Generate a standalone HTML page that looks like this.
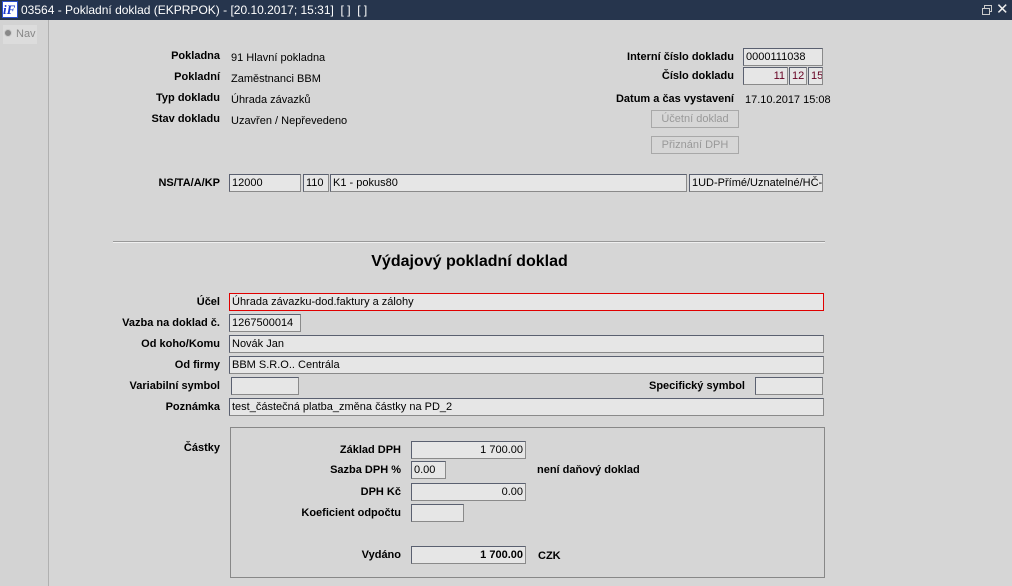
<!DOCTYPE html>
<html><head><meta charset="utf-8"><style>
*{margin:0;padding:0;box-sizing:border-box}
body{width:1012px;height:586px;background:#d6d6d6;font-family:"Liberation Sans",Arial,sans-serif;font-size:11px;color:#000;position:relative;overflow:hidden}
.a{position:absolute;white-space:nowrap}
.l{position:absolute;font-weight:bold;text-align:right;white-space:nowrap}
.f{position:absolute;height:18px;background:#e6e6e6;border:1px solid #8a8a8a;border-top-color:#5a6070;border-left-color:#5a6070;padding:2px 2px 0 2px;white-space:nowrap;overflow:hidden;line-height:13px}
.r{text-align:right}
.btn{position:absolute;height:18px;border:1px solid #a8a8a8;background:#d6d6d6;color:#999;text-align:center;line-height:16px}
</style></head><body>
<div class="a" style="left:0;top:0;width:1012px;height:20px;background:#26354d"></div>
<div class="a" style="left:2px;top:1px;width:16px;height:17px;background:#fff;border:1px solid #2a4fd0"></div>
<div class="a" style="left:3px;top:2px;font:italic bold 13px 'Liberation Serif',serif;color:#1a3ad0">iF</div>
<div class="a" style="left:21px;top:3px;color:#fff;font-size:12px">03564 - Pokladní doklad (EKPRPOK) - [20.10.2017; 15:31]&nbsp; [ ]&nbsp; [ ]</div>
<div class="a" style="left:984px;top:5px;width:8px;height:7px;border:1px solid #ccc"></div>
<div class="a" style="left:982px;top:8px;width:8px;height:7px;border:1px solid #ccc;background:#26354d"></div>
<div class="a" style="left:996px;top:0px;color:#eee;font-size:15px">✕</div>
<div class="a" style="left:0;top:20px;width:49px;height:566px;background:#d3d3d3;border-right:1px solid #b0b0b0"></div>
<div class="a" style="left:3px;top:25px;width:34px;height:19px;background:#dcdcdc"></div>
<div class="a" style="left:4px;top:29px;width:8px;height:8px;border-radius:50%;background:#888;border:1px solid #ccc"></div>
<div class="a" style="left:16px;top:28px;color:#888">Nav</div>

<div class="l" style="right:792px;top:50px">Pokladna</div><div class="a" style="left:231px;top:52px">91 Hlavní pokladna</div>
<div class="l" style="right:792px;top:71px">Pokladní</div><div class="a" style="left:231px;top:73px">Zaměstnanci BBM</div>
<div class="l" style="right:792px;top:92px">Typ dokladu</div><div class="a" style="left:231px;top:94px">Úhrada závazků</div>
<div class="l" style="right:792px;top:113px">Stav dokladu</div><div class="a" style="left:231px;top:115px">Uzavřen / Nepřevedeno</div>

<div class="l" style="right:278px;top:51px">Interní číslo dokladu</div>
<div class="f" style="left:743px;top:48px;width:80px">0000111038</div>
<div class="l" style="right:278px;top:70px">Číslo dokladu</div>
<div class="f r" style="left:743px;top:67px;width:45px;color:#602">11</div>
<div class="f r" style="left:789px;top:67px;width:18px;color:#602">12</div>
<div class="f r" style="left:808px;top:67px;width:15px;color:#602">15</div>
<div class="l" style="right:278px;top:93px">Datum a čas vystavení</div>
<div class="a" style="left:745px;top:94px">17.10.2017 15:08</div>
<div class="btn" style="left:651px;top:110px;width:88px">Účetní doklad</div>
<div class="btn" style="left:651px;top:136px;width:88px">Přiznání DPH</div>

<div class="l" style="right:792px;top:177px">NS/TA/A/KP</div>
<div class="f" style="left:229px;top:174px;width:72px">12000</div>
<div class="f" style="left:303px;top:174px;width:26px">110</div>
<div class="f" style="left:330px;top:174px;width:357px">K1 - pokus80</div>
<div class="f" style="left:689px;top:174px;width:134px">1UD-Přímé/Uznatelné/HČ-D</div>

<div class="a" style="left:113px;top:241px;width:712px;border-top:1px solid #999;border-bottom:1px solid #f0f0f0"></div>
<div class="a" style="left:0;width:939px;top:253px;text-align:center;font-weight:bold;font-size:16px">Výdajový pokladní doklad</div>

<div class="l" style="right:792px;top:296px">Účel</div>
<div class="f" style="left:229px;top:293px;width:595px;border:1px solid #e00000">Úhrada závazku-dod.faktury a zálohy</div>
<div class="l" style="right:792px;top:317px">Vazba na doklad č.</div>
<div class="f" style="left:229px;top:314px;width:72px">1267500014</div>
<div class="l" style="right:792px;top:338px">Od koho/Komu</div>
<div class="f" style="left:229px;top:335px;width:595px">Novák Jan</div>
<div class="l" style="right:792px;top:359px">Od firmy</div>
<div class="f" style="left:229px;top:356px;width:595px">BBM S.R.O.. Centrála</div>
<div class="l" style="right:792px;top:380px">Variabilní symbol</div>
<div class="f" style="left:231px;top:377px;width:68px"></div>
<div class="l" style="right:267px;top:380px">Specifický symbol</div>
<div class="f" style="left:755px;top:377px;width:68px"></div>
<div class="l" style="right:792px;top:401px">Poznámka</div>
<div class="f" style="left:229px;top:398px;width:595px">test_částečná platba_změna částky na PD_2</div>

<div class="l" style="right:792px;top:442px">Částky</div>
<div class="a" style="left:230px;top:427px;width:595px;height:151px;border:1px solid #888"></div>
<div class="l" style="right:611px;top:444px">Základ DPH</div>
<div class="f r" style="left:411px;top:441px;width:115px">1 700.00</div>
<div class="l" style="right:611px;top:464px">Sazba DPH %</div>
<div class="f" style="left:411px;top:461px;width:35px">0.00</div>
<div class="a" style="left:537px;top:464px;font-weight:bold">není daňový doklad</div>
<div class="l" style="right:611px;top:486px">DPH Kč</div>
<div class="f r" style="left:411px;top:483px;width:115px">0.00</div>
<div class="l" style="right:611px;top:507px">Koeficient odpočtu</div>
<div class="f" style="left:411px;top:504px;width:53px"></div>
<div class="l" style="right:611px;top:549px">Vydáno</div>
<div class="f r" style="left:411px;top:546px;width:115px;font-weight:bold">1 700.00</div>
<div class="a" style="left:538px;top:550px;font-weight:bold">CZK</div>
</body></html>
